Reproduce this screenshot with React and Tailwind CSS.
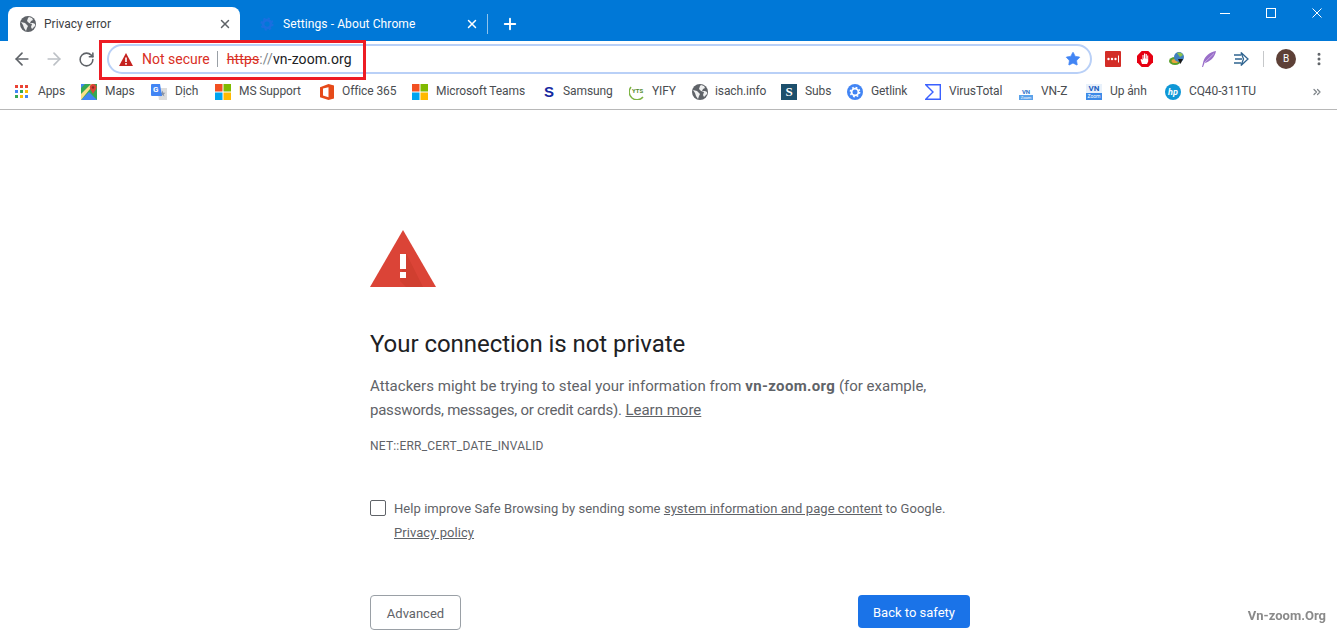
import React from 'react';
import { ArrowLeft, ArrowRight, RotateCw, X, Plus, MoreVertical, ChevronsRight, Star } from 'lucide-react';

const Globe = ({ className }) => (
  <svg viewBox="0 0 16 16" className={className}>
    <circle cx="8" cy="8" r="8" fill="#5f6368" />
    <path d="M1 6l4 1 2 2 1 1-1 2-1 3-2-3-1-3zM9 1l3 1 1 2-2 1-1 2 3 0 2 1 0 2-3 3-1-2 1-3-3-1-2-2 1-3z" fill="#fff" opacity="0.900" />
  </svg>
);

const Windows = () => (
  <svg viewBox="0 0 16 16" className="w-4 h-4">
    <rect x="0" y="0" width="7.500" height="7.500" fill="#f25022" />
    <rect x="8.500" y="0" width="7.500" height="7.500" fill="#7fba00" />
    <rect x="0" y="8.500" width="7.500" height="7.500" fill="#00a4ef" />
    <rect x="8.500" y="8.500" width="7.500" height="7.500" fill="#ffb900" />
  </svg>
);

const AppsIcon = () => {
  const colors = ['#ea4335', '#ea4335', '#ea4335', '#4285f4', '#34a853', '#fbbc05', '#34a853', '#fbbc05', '#4285f4'];
  return (
    <div className="grid grid-cols-3 gap-[2px] w-[13px] h-[13px] -ml-[3px]">
      {colors.map((c, i) => (
        <svg key={i} viewBox="0 0 3 3" className="w-[3px] h-[3px]"><rect width="3" height="3" fill={c} /></svg>
      ))}
    </div>
  );
};

const MapsIcon = () => (
  <svg viewBox="0 0 16 16" className="w-4 h-4">
    <rect width="16" height="16" fill="#34a853" />
    <path d="M0 16L8 8l8 8z" fill="#4285f4" />
    <path d="M0 16V10L10 0h3z" fill="#fbe08a" />
    <path d="M0 4V0h4z" fill="#4285f4" />
    <path d="M12 0c2.200 0 3.600 1.600 3.600 3.400 0 2-2.400 3.600-3.600 6.600-1.200-3-3.200-4.600-3.200-6.600C8.800 1.600 10 0 12 0z" fill="#db4437" />
    <circle cx="12" cy="3.500" r="1.200" fill="#8c2a20" />
  </svg>
);

const TranslateIcon = () => (
  <div className="relative w-4 h-4">
    <svg viewBox="0 0 16 16" className="w-4 h-4">
      <path d="M6 4h10v12H8z" fill="#dcdcdc" />
      <path d="M11.500 6.500l.8 2.200 2.200.1-1.700 1.400.6 2.200-1.900-1.300-1.900 1.300.6-2.200-1.700-1.400 2.200-.1z" fill="#8a94a6" />
      <path d="M1 0h8l2 12H1a1 1 0 0 1-1-1V1a1 1 0 0 1 1-1z" fill="#4285f4" />
    </svg>
    <span className="absolute left-[2px] top-[1px] text-[8px] leading-[10px] font-bold text-white">G</span>
  </div>
);

const OfficeIcon = () => (
  <svg viewBox="0 0 16 16" className="w-4 h-4">
    <path d="M9.500 0L15 1.600v12.800L9.500 16 1 13.200V3.200z" fill="#e64a19" />
    <path d="M4 4.400l5.500-1.200v10L4 11.600z" fill="#fff" />
  </svg>
);

const SamsungIcon = () => (
  <div className="w-4 h-4 flex items-center justify-center text-[15px] leading-4 font-bold text-[#1428a0] font-['Liberation_Sans',sans-serif]">S</div>
);

const YifyIcon = () => (
  <div className="relative w-4 h-4">
    <svg viewBox="0 0 16 16" className="w-4 h-4">
      <path d="M2 3a7 7 0 0 0 12 10" fill="none" stroke="#7cb342" strokeWidth="1.500" />
    </svg>
    <span className="absolute left-[3px] top-[3px] text-[6px] leading-[8px] font-bold text-[#558b2f]">YTS</span>
  </div>
);

const SubsIcon = () => (
  <div className="w-4 h-4 bg-[#1c4f6c] flex items-center justify-center text-[13px] leading-4 font-bold text-white font-['Liberation_Serif',serif]">S</div>
);

const GearIcon = () => (
  <svg viewBox="0 0 16 16" className="w-4 h-4">
    <circle cx="8" cy="8" r="8" fill="#4285f4" />
    <circle cx="8" cy="8" r="3.400" fill="none" stroke="#fff" strokeWidth="1.800" />
    <circle cx="8" cy="8" r="4.700" fill="none" stroke="#fff" strokeWidth="1.400" strokeDasharray="1.800 1.900" />
  </svg>
);

const SigmaIcon = () => (
  <svg viewBox="0 0 16 16" className="w-4 h-4">
    <path d="M.7.700h14.600v14.600H.7L8 8z" fill="none" stroke="#3b61ff" strokeWidth="1.400" />
  </svg>
);

const VnSmallIcon = () => (
  <div className="w-4 h-4 flex flex-col items-center justify-end">
    <span className="text-[6px] leading-[7px] font-bold text-[#2a6fc9]">VN</span>
    <span className="w-[14px] bg-[#5aa2ea] text-[4px] leading-[5px] text-white text-center">Zoom</span>
  </div>
);

const VnBigIcon = () => (
  <div className="w-4 h-4 flex flex-col items-center bg-[#e8f1fb]">
    <span className="text-[8px] leading-[9px] font-bold text-[#1c5fc0]">VN</span>
    <span className="w-4 bg-[#3d8be8] text-[5px] leading-[7px] text-white text-center">Zoom</span>
  </div>
);

const HpIcon = () => (
  <div className="w-4 h-4 rounded-full bg-[#0f97d6] flex items-center justify-center text-[9px] leading-4 italic font-bold text-white">hp</div>
);

const bookmarks = [
  { label: 'Apps', icon: <AppsIcon />, item: 'w-[66px]', gap: 'ml-[23px]' },
  { label: 'Maps', icon: <MapsIcon />, item: 'w-[70px]', gap: 'ml-[24px]' },
  { label: 'Dịch', icon: <TranslateIcon />, item: 'w-[64px]', gap: 'ml-[24px]' },
  { label: 'MS Support', icon: <Windows />, item: 'w-[104px]', gap: 'ml-[24px]' },
  { label: 'Office 365', icon: <OfficeIcon />, item: 'w-[93px]', gap: 'ml-[23px]' },
  { label: 'Microsoft Teams', icon: <Windows />, item: 'w-[129px]', gap: 'ml-[24px]' },
  { label: 'Samsung', icon: <SamsungIcon />, item: 'w-[88px]', gap: 'ml-[22px]' },
  { label: 'YIFY', icon: <YifyIcon />, item: 'w-[63px]', gap: 'ml-[23px]' },
  { label: 'isach.info', icon: <Globe className="w-4 h-4" />, item: 'w-[89px]', gap: 'ml-[23px]' },
  { label: 'Subs', icon: <SubsIcon />, item: 'w-[66px]', gap: 'ml-[24px]' },
  { label: 'Getlink', icon: <GearIcon />, item: 'w-[78px]', gap: 'ml-[24px]' },
  { label: 'VirusTotal', icon: <SigmaIcon />, item: 'w-[93px]', gap: 'ml-[24px]' },
  { label: 'VN-Z', icon: <VnSmallIcon />, item: 'w-[68px]', gap: 'ml-[23px]' },
  { label: 'Up ảnh', icon: <VnBigIcon />, item: 'w-[79px]', gap: 'ml-[24px]' },
  { label: 'CQ40-311TU', icon: <HpIcon />, item: 'w-[146px]', gap: 'ml-[24px]' },
];

const Bookmark = ({ label, icon, item, gap }) => (
  <div className={`relative h-4 shrink-0 flex items-center ${item}`}>
    <span className="absolute left-0 top-0 w-4 h-4 flex items-center justify-center">{icon}</span>
    <span className={`${gap} -mt-[2px] text-[12px] leading-4 tracking-[-0.1px] text-[#4a4d51] whitespace-nowrap`}>{label}</span>
  </div>
);

const ExtensionIcons = () => (
  <div className="flex items-center">
    {/* LastPass */}
    <svg viewBox="0 0 16 16" className="w-4 h-4">
      <rect width="16" height="16" rx="1" fill="#d32d27" />
      <circle cx="3.500" cy="8" r="1.200" fill="#fff" />
      <circle cx="7" cy="8" r="1.200" fill="#fff" />
      <circle cx="10.500" cy="8" r="1.200" fill="#fff" />
      <rect x="13" y="4.500" width="1" height="7" fill="#fff" />
    </svg>
    {/* adblock hand */}
    <svg viewBox="0 0 16 16" className="w-4 h-4 ml-[16px]">
      <path d="M4.700 0h6.600L16 4.700v6.600L11.300 16H4.700L0 11.300V4.700z" fill="#e60012" />
      <path d="M5 13L3.500 8.500l1-.5L5.500 9V4h1v3.500h.5V2.500h1.200v5h.5V3h1.100v5h.4V4.500h1v6L10 13z" fill="#fff" />
    </svg>
    {/* IDM */}
    <svg viewBox="0 0 16 16" className="w-4 h-4 ml-[16px]">
      <ellipse cx="6" cy="10" rx="6" ry="4" fill="#5aa02c" />
      <ellipse cx="6" cy="10" rx="3.500" ry="2" fill="#e8a33d" />
      <circle cx="10" cy="6" r="5" fill="#3f7fbf" />
      <path d="M8 2a5 5 0 0 1 6 2l-3 2z" fill="#8bc34a" />
      <path d="M9 8h5l-2.500 5z" fill="#1a1a1a" />
    </svg>
    {/* feather */}
    <svg viewBox="0 0 16 16" className="w-4 h-4 ml-[16px]">
      <path d="M15 0C9 1 4 5 2.500 10L1 16l1 0 1.500-4C9 11 14 6 15 0z" fill="#9a6fc9" />
      <path d="M13 2.500L3 12" stroke="#d9c6ee" strokeWidth="0.700" />
    </svg>
    {/* arrow */}
    <svg viewBox="0 0 16 16" className="w-4 h-4 ml-[16px]" fill="none" stroke="#2f6490" strokeWidth="1.300">
      <path d="M8 1.500L15 8l-7 6.500 2.500-6.500z" />
      <path d="M1 4h7M2 8h7M1 12h7" />
    </svg>
  </div>
);

export default function App() {
  return (
    <div className="relative w-[1337px] h-[633px] overflow-hidden bg-white font-['Roboto','Noto_Sans',sans-serif]">
      {/* tab strip */}
      <div className="h-[41px] bg-[#0078d7] flex items-end relative">
        <div className="ml-[8px] w-[232px] h-[34px] bg-white rounded-t-[8px] flex items-center pl-[12px] pr-[8px]">
          <Globe className="w-[16px] h-[16px] shrink-0 mr-[8px]" />
          <span className="text-[12px] text-[#3c4043] flex-1 whitespace-nowrap">Privacy error</span>
          <X size={14} strokeWidth={2.500} className="text-[#5f6368]" />
        </div>
        <div className="w-[247px] h-[34px] flex items-center pl-[20px] pr-[8px]">
          <svg viewBox="0 0 16 16" className="w-[14px] h-[14px] shrink-0 mr-[9px]">
            <circle cx="8" cy="8" r="4.500" fill="none" stroke="#1a6fe0" strokeWidth="3" />
            <circle cx="8" cy="8" r="6.500" fill="none" stroke="#1a6fe0" strokeWidth="2" strokeDasharray="2.500 2.600" />
          </svg>
          <span className="text-[12px] tracking-[0.1px] text-white flex-1 whitespace-nowrap">Settings - About Chrome</span>
          <X size={14} strokeWidth={2.500} className="text-white" />
        </div>
        <div className="w-px h-[20px] bg-[#8fc3ec] mb-[7px]"></div>
        <Plus size={18} strokeWidth={2.500} className="text-white ml-[13px] mb-[8px]" />
        <div className="ml-auto -mr-[3px] self-start flex items-center text-white">
          <div className="w-[46px] h-[26px] flex items-center justify-center">
            <svg viewBox="0 0 10 10" className="w-[10px] h-[10px]"><path d="M0 5.500h10" stroke="currentColor" /></svg>
          </div>
          <div className="w-[46px] h-[26px] flex items-center justify-center">
            <svg viewBox="0 0 10 10" className="w-[10px] h-[10px]"><rect x="0.500" y="0.500" width="9" height="9" fill="none" stroke="currentColor" /></svg>
          </div>
          <div className="w-[46px] h-[26px] flex items-center justify-center">
            <svg viewBox="0 0 10 10" className="w-[10px] h-[10px]"><path d="M.5.500l9 9M9.500.500l-9 9" stroke="currentColor" /></svg>
          </div>
        </div>
      </div>

      {/* toolbar */}
      <div className="h-[36px] bg-white flex items-center pl-[12px]">
        <ArrowLeft size={20} strokeWidth={2} className="text-[#5f6368] shrink-0" />
        <ArrowRight size={20} strokeWidth={2} className="text-[#bdc1c6] ml-[12px] shrink-0" />
        <RotateCw size={17} strokeWidth={2.200} className="text-[#5f6368] ml-[14px] shrink-0" />
        <div className="ml-[12px] w-[985px] h-[30px] shrink-0 border-2 border-[#b9d0f7] rounded-full flex items-center pl-[10px] pr-[9px]">
          <svg viewBox="0 0 14 13" className="w-[14px] h-[13px] shrink-0">
            <path d="M7 0l7 13H0z" fill="#c5221f" />
            <rect x="6.200" y="4.500" width="1.600" height="4.500" fill="#fff" />
            <rect x="6.200" y="10" width="1.600" height="1.700" fill="#fff" />
          </svg>
          <span className="ml-[9px] text-[14px] text-[#d93025] whitespace-nowrap">Not secure</span>
          <span className="w-px h-[16px] bg-[#9aa0a6] ml-[7px]"></span>
          <span className="ml-[9px] text-[14px] tracking-[0.1px] text-[#202124] whitespace-nowrap">
            <span className="text-[#d93025] line-through">https</span><span className="text-[#80868b]">://</span>vn-zoom.org
          </span>
          <Star size={16} fill="#4285f4" strokeWidth={1} className="text-[#4285f4] ml-auto" />
        </div>
        <div className="ml-[13px]"><ExtensionIcons /></div>
        <div className="w-px h-[16px] bg-[#c6c8ca] ml-[14px]"></div>
        <div className="ml-[12px] w-[20px] h-[20px] rounded-full bg-[#5d4037] text-white text-[10px] leading-none flex items-center justify-center">B</div>
        <MoreVertical size={16} strokeWidth={2.500} className="text-[#5f6368] ml-[15px]" />
      </div>

      {/* bookmarks bar */}
      <div className="h-[33px] border-b border-[#b8b8b8] flex items-center pl-[15px] pb-[3px]">
        {bookmarks.map((b) => (
          <Bookmark key={b.label} {...b} />
        ))}
        <ChevronsRight size={12} strokeWidth={2.500} className="text-[#80868b]" />
      </div>

      {/* interstitial */}
      <div className="ml-[370px] w-[600px] pt-[120px]">
        <svg viewBox="0 0 66 57" className="w-[66px] h-[57px]">
          <path d="M33 0l33 57H0z" fill="#db4437" />
          <path d="M36 23l17 34H36l-6-6z" fill="#c53929" opacity="0.500" />
          <rect x="30" y="24" width="6" height="15" fill="#fff" />
          <rect x="30" y="42" width="6" height="6" fill="#fff" />
        </svg>
        <h1 className="mt-[39px] text-[24px] leading-[36px] tracking-[-0.05px] font-normal text-[#202124]">Your connection is not private</h1>
        <div className="mt-[12px] text-[15px] leading-[24px] text-[#5f6368]">
          <div className="whitespace-nowrap">
            <span className="tracking-[0.03px]">Attackers might be trying to steal your information from </span>
            <b className="font-bold tracking-[0.35px]">vn-zoom.org</b> (for example,
          </div>
          <div className="whitespace-nowrap">
            <span className="tracking-[-0.23px]">passwords, messages, or credit cards).</span> <span className="underline">Learn more</span>
          </div>
        </div>
        <div className="mt-[16px] text-[12px] leading-[16px] tracking-[0.2px] text-[#5f6368]">NET::ERR_CERT_DATE_INVALID</div>
        <div className="mt-[45px] flex items-start">
          <div className="w-[16px] h-[16px] mt-[1px] border border-[#5f6368] rounded-[2px] shrink-0"></div>
          <div className="ml-[8px] text-[13px] leading-[24px] tracking-[0.06px] text-[#5f6368] -mt-[2px]">
            <div className="whitespace-nowrap">Help improve Safe Browsing by sending some <span className="underline">system information and page content</span> to Google.</div>
            <div className="underline">Privacy policy</div>
          </div>
        </div>
        <div className="mt-[50px] flex items-start justify-between">
          <div className="w-[91px] h-[35px] pt-[2px] border border-[#9aa0a6] rounded-[4px] flex items-center justify-center text-[13px] text-[#5f6368]">Advanced</div>
          <div className="w-[112px] h-[33px] pt-[2px] bg-[#1a73e8] rounded-[4px] flex items-center justify-center text-[13px] text-white">Back to safety</div>
        </div>
      </div>

      {/* red highlight box */}
      <div className="absolute left-[99px] top-[40px] w-[267px] h-[40px] border-[3px] border-[#ed1c24]"></div>

      {/* watermark */}
      <div className="absolute right-[11px] top-[608px] text-[13px] leading-[16px] font-bold text-[#8a8a8a] blur-[0.6px]">Vn-zoom.Org</div>
    </div>
  );
}
